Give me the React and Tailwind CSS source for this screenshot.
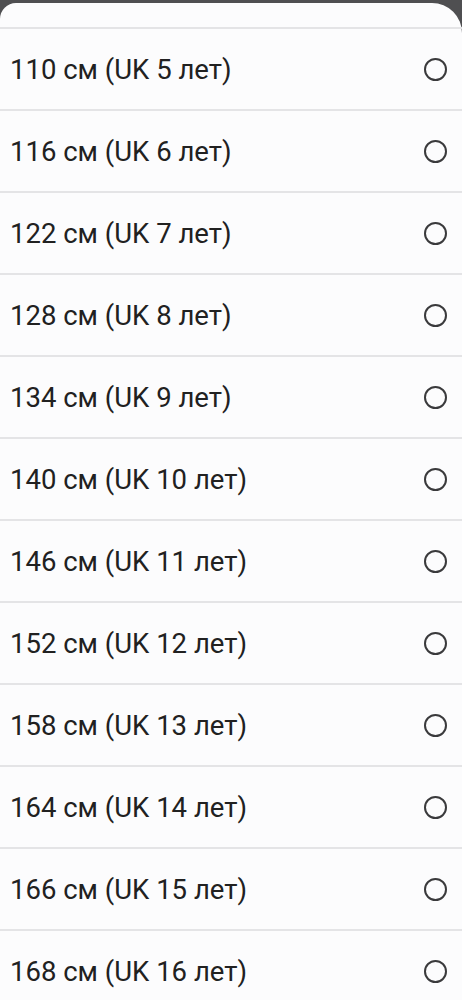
import React from 'react';

const sizes = [
  ['110', '5'],
  ['116', '6'],
  ['122', '7'],
  ['128', '8'],
  ['134', '9'],
  ['140', '10'],
  ['146', '11'],
  ['152', '12'],
  ['158', '13'],
  ['164', '14'],
  ['166', '15'],
  ['168', '16'],
];

const App = () => {
  return (
    <div className="h-[1000px] overflow-hidden bg-[#4f4f51] pt-[3px]" style={{ fontFamily: 'Roboto, "Noto Sans", sans-serif' }}>
      <div className="h-full bg-[#fcfcfd] rounded-tl-[16px] rounded-tr-[30px] pt-[24px]">
        {sizes.map(([cm, uk]) => (
          <div key={cm} className="h-[82px] border-t-2 border-[#e4e4e6] flex items-center justify-between pl-[10px] pr-[15px]">
            <span className="text-[27.5px] text-[#212121] pt-[2px]">
              {cm} см (UK {uk} лет)
            </span>
            <span className="w-[23px] h-[23px] rounded-full border-[2.5px] border-[#3a3a3c]" />
          </div>
        ))}
      </div>
    </div>
  );
};

export default App;
